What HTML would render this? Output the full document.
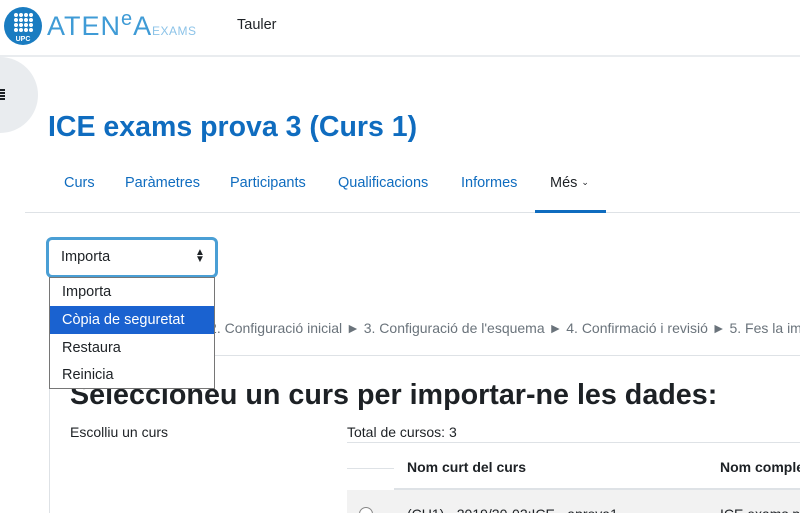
<!DOCTYPE html>
<html style="overflow:hidden"><head><meta charset="utf-8"><style>
html,body{overflow:hidden}
body{margin:0;width:800px;height:513px;overflow:hidden;background:#fff;font-family:"Liberation Sans",sans-serif;color:#1d2125;position:relative}
.a{position:absolute;white-space:nowrap}
.nav{color:#0f6cbf;font-size:14.5px;top:175px}
</style></head><body>
<div class="a" style="left:0;top:0;width:800px;height:55px;border-bottom:2px solid #e9ecef"></div>
<svg class="a" style="left:3px;top:6px" width="40" height="40" viewBox="0 0 40 40"><circle cx="20" cy="20" r="19" fill="#1a7cc1"/>
<g fill="#fff"><circle cx="13" cy="9" r="2"/><circle cx="18" cy="9" r="2"/><circle cx="23" cy="9" r="2"/><circle cx="28" cy="9" r="2"/><circle cx="13" cy="14" r="2"/><circle cx="18" cy="14" r="2"/><circle cx="23" cy="14" r="2"/><circle cx="28" cy="14" r="2"/><circle cx="13" cy="19" r="2"/><circle cx="18" cy="19" r="2"/><circle cx="23" cy="19" r="2"/><circle cx="28" cy="19" r="2"/><circle cx="13" cy="24" r="2"/><circle cx="18" cy="24" r="2"/><circle cx="23" cy="24" r="2"/><circle cx="28" cy="24" r="2"/></g>
<text x="20" y="35" fill="#fff" font-size="7" font-weight="bold" text-anchor="middle" font-family="Liberation Sans">UPC</text></svg>
<div class="a" style="left:47px;top:11px;font-size:27px;color:#3f9bd6;letter-spacing:1px">ATEN<span style="position:relative;top:-10px;font-size:20px">e</span>A</div>
<div class="a" style="left:152px;top:24px;font-size:12px;color:#8cc3e8;letter-spacing:0.5px">EXAMS</div>
<div class="a" style="left:237px;top:17px;font-size:14.5px;color:#1d2125">Tauler</div>
<div class="a" style="left:-38px;top:57px;width:76px;height:76px;border-radius:50%;background:#e9ecef"></div>
<div class="a" style="left:0;top:89px;width:5px;height:2px;background:#1d2125;box-shadow:0 3px #1d2125,0 6px #1d2125,0 9px #1d2125"></div>
<div class="a" style="left:48px;top:111px;font-size:28.5px;font-weight:bold;color:#0f6cbf">ICE exams prova 3 (Curs 1)</div>
<div class="a nav" style="left:64px">Curs</div>
<div class="a nav" style="left:125px">Paràmetres</div>
<div class="a nav" style="left:230px">Participants</div>
<div class="a nav" style="left:338px">Qualificacions</div>
<div class="a nav" style="left:461px">Informes</div>
<div class="a nav" style="left:550px;color:#1d2125">Més <span style="font-size:9px;position:relative;top:-2px">&#8964;</span></div>
<div class="a" style="left:25px;top:212px;width:775px;height:1px;background:#dee2e6"></div>
<div class="a" style="left:535px;top:210px;width:71px;height:3px;background:#0f6cbf"></div>
<div class="a" style="left:49px;top:355px;width:751px;height:1px;background:#dee2e6"></div>
<div class="a" style="left:49px;top:355px;width:1px;height:158px;background:#dee2e6"></div>
<div class="a" style="left:66px;top:320px;font-size:14px;color:#6a737b">1. Selecció del curs ► 2. Configuració inicial ► 3. Configuració de l'esquema ► 4. Confirmació i revisió ► 5. Fes la importació</div>
<div class="a" style="left:70px;top:379px;font-size:28.7px;font-weight:bold">Seleccioneu un curs per importar-ne les dades:</div>
<div class="a" style="left:70px;top:424px;font-size:14px">Escolliu un curs</div>
<div class="a" style="left:347px;top:424px;font-size:14px">Total de cursos: 3</div>
<div class="a" style="left:347px;top:442px;width:453px;height:1px;background:#dee2e6"></div>
<div class="a" style="left:347px;top:468px;width:47px;height:1px;background:#dee2e6"></div>
<div class="a" style="left:394px;top:488px;width:406px;height:2px;background:#dee2e6"></div>
<div class="a" style="left:407px;top:459px;font-size:14px;font-weight:bold">Nom curt del curs</div>
<div class="a" style="left:720px;top:459px;font-size:14px;font-weight:bold">Nom complet</div>
<div class="a" style="left:347px;top:490px;width:453px;height:23px;background:#f2f2f2"></div>
<div class="a" style="left:359px;top:507px;width:12px;height:12px;border-radius:50%;border:1px solid #888;background:#fff"></div>
<div class="a" style="left:407px;top:506px;font-size:14px">(CU1) - 2019/20-02:ICE - aprova1</div>
<div class="a" style="left:720px;top:506px;font-size:14px">ICE exams prova</div>
<div class="a" style="left:46px;top:237px;width:166px;height:35px;border:3px solid #4a9fd5;border-radius:6px;background:#fff"></div>
<div class="a" style="left:61px;top:249px;font-size:14.5px">Importa</div>
<div class="a" style="left:195px;top:249px;font-size:10px;line-height:7px">&#9650;<br>&#9660;</div>
<div class="a" style="left:49px;top:277px;width:164px;height:110px;border:1px solid #767676;background:#fff;font-size:14.5px">
<div style="height:28px;line-height:28px;padding-left:12px">Importa</div>
<div style="height:28px;line-height:28px;padding-left:12px;background:#1a62d0;color:#fff">Còpia de seguretat</div>
<div style="height:28px;line-height:28px;padding-left:12px">Restaura</div>
<div style="height:26px;line-height:26px;padding-left:12px">Reinicia</div>
</div>
</body></html>
